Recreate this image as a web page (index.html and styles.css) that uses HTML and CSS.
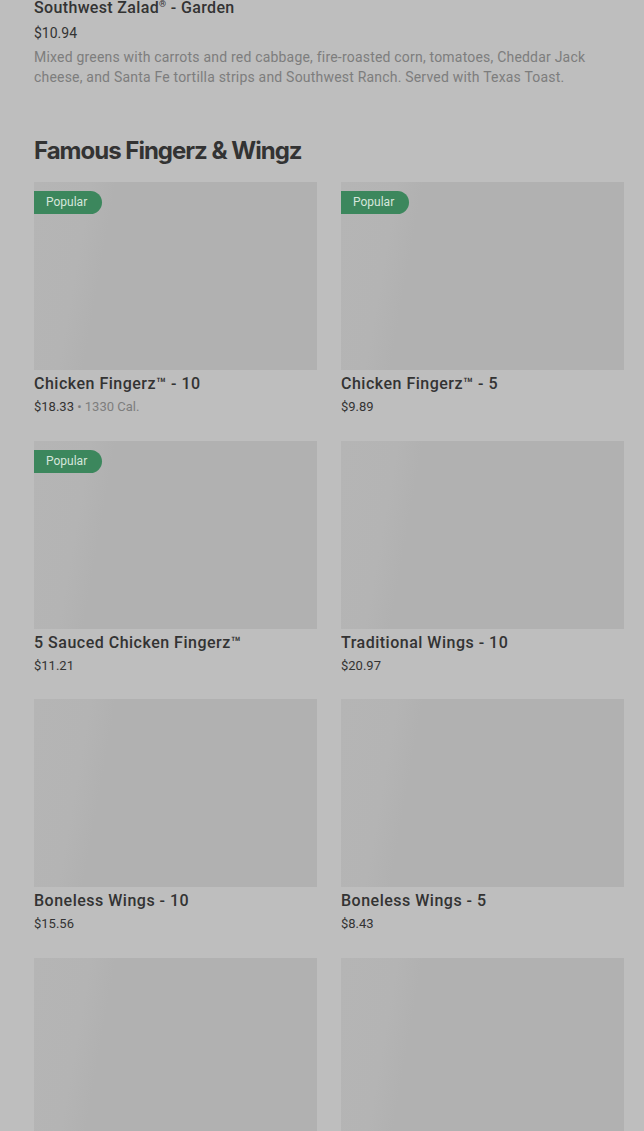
FILE: index.html
```html
<!DOCTYPE html>
<html lang="en">
<head>
<meta charset="utf-8">
<title>Menu</title>
<link rel="stylesheet" href="styles.css">
</head>
<body>
<main class="page">
  <div class="prev-item">
    <div class="prev-title">Southwest Zalad<sup class="reg">®</sup> - Garden</div>
    <div class="prev-price">$10.94</div>
    <p class="prev-desc">Mixed greens with carrots and red cabbage, fire-roasted corn, tomatoes, Cheddar Jack cheese, and Santa Fe tortilla strips and Southwest Ranch. Served with Texas Toast.</p>
  </div>

  <section class="section">
    <h2 class="section-title">Famous Fingerz &amp; Wingz</h2>
    <div class="grid">
      <div class="card">
        <div class="thumb"><span class="badge">Popular</span></div>
        <div class="card-title">Chicken Fingerz™ - 10</div>
        <div class="card-price">$18.33 <span class="cal">• 1330 Cal.</span></div>
      </div>
      <div class="card">
        <div class="thumb"><span class="badge">Popular</span></div>
        <div class="card-title">Chicken Fingerz™ - 5</div>
        <div class="card-price">$9.89</div>
      </div>
      <div class="card">
        <div class="thumb"><span class="badge">Popular</span></div>
        <div class="card-title">5 Sauced Chicken Fingerz™</div>
        <div class="card-price">$11.21</div>
      </div>
      <div class="card">
        <div class="thumb"></div>
        <div class="card-title">Traditional Wings - 10</div>
        <div class="card-price">$20.97</div>
      </div>
      <div class="card">
        <div class="thumb"></div>
        <div class="card-title">Boneless Wings - 10</div>
        <div class="card-price">$15.56</div>
      </div>
      <div class="card">
        <div class="thumb"></div>
        <div class="card-title">Boneless Wings - 5</div>
        <div class="card-price">$8.43</div>
      </div>
      <div class="card">
        <div class="thumb"></div>
      </div>
      <div class="card">
        <div class="thumb"></div>
      </div>
    </div>
  </section>
</main>
</body>
</html>
```

FILE: styles.css
```css
html, body {
  margin: 0;
  padding: 0;
  background: #bebebe;
  overflow: hidden;
}

.page {
  padding: 0 20px 0 34px;
  margin-top: -2px;
  font-family: Roboto, "Liberation Sans", sans-serif;
  color: #2f2f2f;
}

.prev-title {
  height: 20px;
  font-size: 16px;
  line-height: 20px;
  font-weight: 500;
  letter-spacing: 0.35px;
  color: #333333;
}

.reg {
  font-size: 9px;
  line-height: 0;
  vertical-align: 6px;
}

.prev-price {
  margin-top: 5px;
  font-size: 14px;
  line-height: 20px;
  color: #333333;
}

.prev-desc {
  margin: 4px 0 0;
  font-size: 14px;
  line-height: 20px;
  letter-spacing: 0.2px;
  color: #7d7d7d;
  max-width: 570px;
}

.section {
  margin-top: 48px;
}

.section-title {
  margin: 0;
  font-family: Inter, "Open Sans", sans-serif;
  font-size: 24px;
  line-height: 32px;
  font-weight: 700;
  letter-spacing: -1px;
  color: #333333;
}

.grid {
  margin-top: 15px;
  display: grid;
  grid-template-columns: 283px 283px;
  column-gap: 24px;
  row-gap: 23.5px;
}

.thumb {
  position: relative;
  height: 188px;
  background: linear-gradient(100deg, #b5b5b5 0%, #b4b4b4 18%, #b1b1b1 26%, #b1b1b1 100%);
}

.badge {
  position: absolute;
  left: 0;
  top: 9px;
  height: 23px;
  width: 68px;
  box-sizing: border-box;
  padding-left: 12px;
  border-radius: 0 12px 12px 0;
  background: #3c875d;
  color: #d6e6dc;
  font-size: 12px;
  line-height: 23px;
}

.card-title {
  margin-top: 4px;
  height: 20px;
  overflow: hidden;
  font-size: 16px;
  line-height: 20px;
  font-weight: 500;
  letter-spacing: 0.5px;
  color: #333333;
}

.card-price {
  margin-top: 3px;
  height: 20px;
  font-size: 13px;
  line-height: 20px;
  color: #333333;
}

.cal {
  color: #7d7d7d;
}
```
